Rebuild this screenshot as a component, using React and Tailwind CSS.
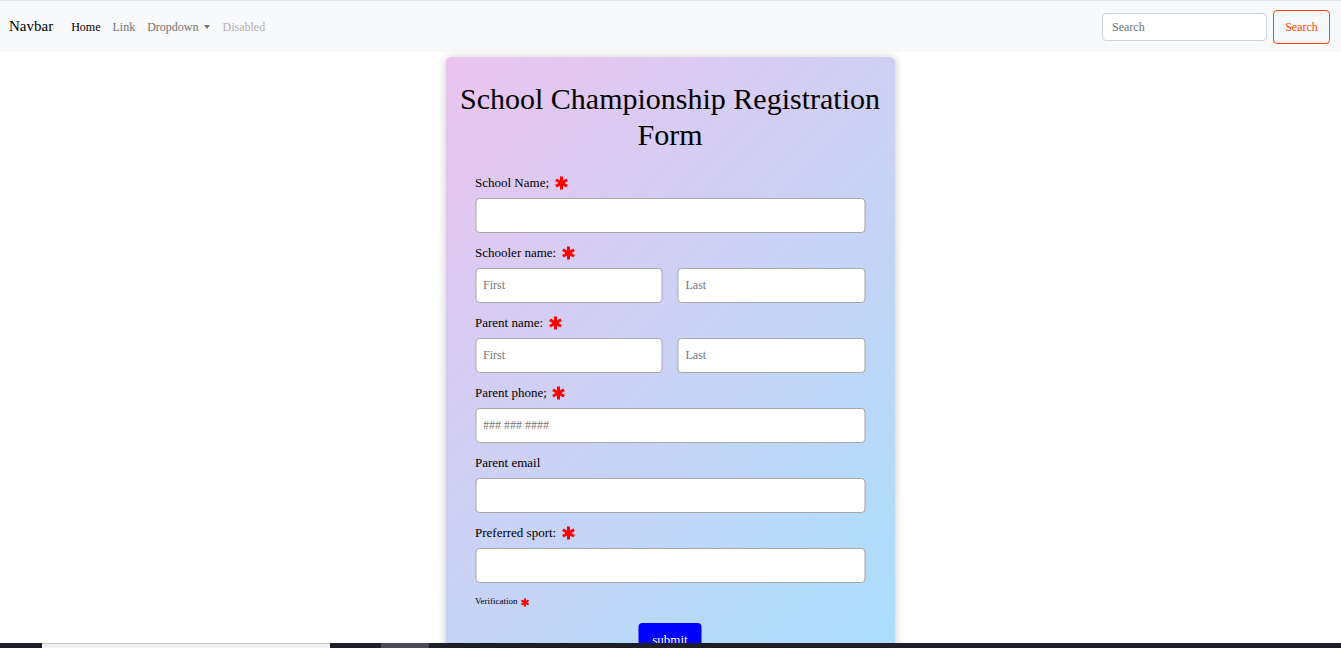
import React from "react";

function Star({ size = 14 }) {
  return (
    <svg width={size} height={size} viewBox="0 0 14 14" className="inline-block shrink-0">
      <g stroke="#ff0000" strokeWidth="3" strokeLinecap="butt">
        <line x1="7" y1="0.5" x2="7" y2="13.5" />
        <line x1="1.4" y1="3.75" x2="12.6" y2="10.25" />
        <line x1="1.4" y1="10.25" x2="12.6" y2="3.75" />
      </g>
    </svg>
  );
}

function Label({ text, req }) {
  return (
    <div className="mb-[5px] flex h-[20px] items-center gap-[5px] text-[13px] text-black">
      <span>{text}</span>
      {req && <Star />}
    </div>
  );
}

const inputCls =
  "h-[35px] w-full rounded-[4px] border border-[#a7a7a7] bg-white px-[7px] text-[12px] placeholder:text-[#767676] outline-none";

export default function App() {
  return (
    <div className="min-h-screen bg-white" style={{ fontFamily: '"Liberation Serif", "Times New Roman", serif' }}>
      <nav className="flex h-[52px] items-center justify-between border-t border-[#e3e3e3] bg-[#f8f9fa] pl-[9px] pr-[11px]">
        <div className="flex items-center">
          <span className="mr-[12px] text-[15px] text-black">Navbar</span>
          <div className="flex items-center text-[12px]">
            <span className="px-[6px] text-black">Home</span>
            <span className="px-[6px] text-[#737373]">Link</span>
            <span className="flex items-center px-[6px] text-[#737373]">
              Dropdown
              <span className="ml-[6px] inline-block h-0 w-0 border-x-[3px] border-t-[4px] border-x-transparent border-t-[#737373]"></span>
            </span>
            <span className="px-[6px] text-[#b3b3b3]">Disabled</span>
          </div>
        </div>
        <div className="flex items-center gap-[6px]">
          <input
            className="h-[28px] w-[165px] rounded-[4px] border border-[#ced4da] bg-white px-[9px] pt-[1px] text-[12px] placeholder:text-[#6c757d] outline-none"
            placeholder="Search"
          />
          <button className="h-[34px] w-[57px] rounded-[4px] border border-[#ff4500] text-[12px] text-[#ff4500]">
            Search
          </button>
        </div>
      </nav>

      <div className="flex justify-center pt-[5px]">
        <div className="w-[450px] -translate-x-[0.5px] rounded-[6px] bg-[linear-gradient(135deg,#ebc4ef,#a8e0fb)] px-[30px] pt-[24px] pb-[24px] shadow-[0_0_8px_rgba(0,0,0,0.18)]">
          <h1 className="-mx-[20px] mb-[20px] text-center text-[30px] leading-[36px] text-black">
            School Championship Registration Form
          </h1>

          <div className="mb-[10px]">
            <Label text="School Name;" req />
            <input className={inputCls} />
          </div>

          <div className="mb-[10px]">
            <Label text="Schooler name:" req />
            <div className="flex gap-[15px]">
              <input className={inputCls} placeholder="First" />
              <input className={inputCls} placeholder="Last" />
            </div>
          </div>

          <div className="mb-[10px]">
            <Label text="Parent name:" req />
            <div className="flex gap-[15px]">
              <input className={inputCls} placeholder="First" />
              <input className={inputCls} placeholder="Last" />
            </div>
          </div>

          <div className="mb-[10px]">
            <Label text="Parent phone;" req />
            <input className={inputCls} placeholder="### ### ####" />
          </div>

          <div className="mb-[10px]">
            <Label text="Parent email" />
            <input className={inputCls} />
          </div>

          <div className="mb-[10px]">
            <Label text="Preferred sport:" req />
            <input className={inputCls} />
          </div>

          <div className="flex h-[18px] items-center gap-[3px] text-[9px] text-black">
            <span>Verification</span>
            <Star size={9} />
          </div>

          <div className="mt-[12px] flex justify-center">
            <button className="h-[32px] w-[63px] rounded-[4px] bg-[#0000ff] pt-[2px] text-[13px] text-white">submit</button>
          </div>
        </div>
      </div>

      <div className="fixed bottom-0 left-0 flex h-[5px] w-full bg-[#1f1f29]">
        <div className="w-[42px]"></div>
        <div className="w-[288px] border-t border-[#c6c6c6] bg-[#f0f0f0]"></div>
        <div className="w-[51px]"></div>
        <div className="w-[48px] bg-[#4b4a54]"></div>
      </div>
    </div>
  );
}
